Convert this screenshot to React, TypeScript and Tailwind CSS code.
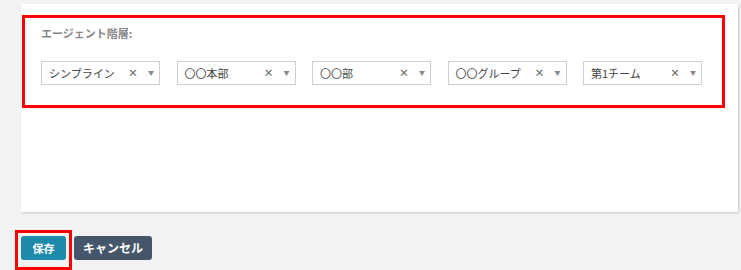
const selects = ["シンプライン", "〇〇本部", "〇〇部", "〇〇グループ", "第1チーム"];

function TagSelect({ value }: { value: string }) {
  return (
    <div className="flex h-[24px] w-[119px] items-center border border-[#cfcfcf] bg-white pl-[7px] pr-[5px] text-[11px] text-[#444]">
      <span className="flex-1 whitespace-nowrap leading-none">{value}</span>
      <span className="mr-[10px] text-[10px] font-bold leading-none text-[#666]">×</span>
      <span className="text-[6px] leading-none text-[#888]">▼</span>
    </div>
  );
}

export default function App() {
  return (
    <div
      className="h-[270px] w-[741px] overflow-hidden bg-[#f3f3f3]"
      style={{ fontFamily: '"Noto Sans CJK JP", "Noto Sans", sans-serif' }}
    >
      <div className="ml-[21px] pt-[4px]">
        <div className="h-[208px] w-[717px] bg-white shadow-[1px_1px_2px_rgba(0,0,0,0.18)]">
          <div className="ml-[1px] pt-[11px]">
            <div className="h-[93px] w-[703px] border-[3px] border-[#ff0000] pl-[16px] pt-[8px]">
              <p className="text-[11px] font-semibold leading-[14px] text-[#888]">エージェント階層:</p>
              <div className="mt-[21px] flex gap-[16.5px]">
                {selects.map((s) => (
                  <TagSelect key={s} value={s} />
                ))}
              </div>
            </div>
          </div>
        </div>
      </div>
      <div className="ml-[15px] mt-[18px] flex items-start gap-[2px]">
        <div className="border-[3px] border-[#ff0000] px-[3px] pb-[7px] pt-[3px]">
          <button
            type="button"
            className="flex h-[24px] w-[45px] items-center justify-center rounded-[3px] bg-[#1c8aa8] text-[11px] font-bold text-white"
          >
            保存
          </button>
        </div>
        <button
          type="button"
          className="mt-[6px] flex h-[24px] w-[78px] items-center justify-center rounded-[3px] bg-[#46566a] text-[12px] font-bold text-white"
        >
          キャンセル
        </button>
      </div>
    </div>
  );
}
